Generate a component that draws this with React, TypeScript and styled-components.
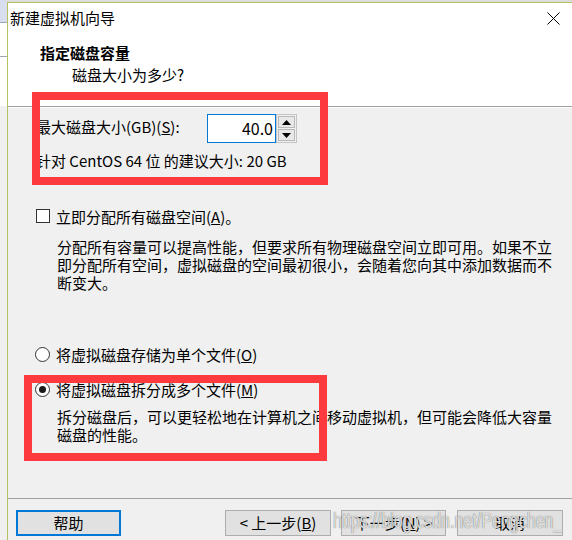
import React from "react";
import styled, { createGlobalStyle } from "styled-components";

const Global = createGlobalStyle`
  html, body { margin: 0; padding: 0; background: #f0f0f0; }
  body { font-family: "Noto Sans CJK SC", "Microsoft YaHei", sans-serif; color: #000; }
  * { box-sizing: border-box; }
`;

const Page = styled.div`
  position: relative;
  width: 572px;
  height: 540px;
  overflow: hidden;
  display: flex;
  background: #f0f0f0;
`;

const LeftStrip = styled.div`
  flex: 0 0 7px;
  display: flex;
  flex-direction: column;
  background: #f0f0f0;
`;

const StripPart = styled.div<{ $h: number; $bg: string; $line?: boolean }>`
  height: ${(p) => p.$h}px;
  background: ${(p) => p.$bg};
  border-bottom: ${(p) => (p.$line ? "1px solid #9ea6b3" : "none")};
`;

const Dialog = styled.div`
  flex: 1;
  display: flex;
  flex-direction: column;
  margin-top: 2px;
  border-top: 1px solid #b4c25e;
  border-left: 1px solid #b4c25e;
  background: #f0f0f0;
  box-shadow: 0 -2px 0 #dcdcdc;
`;

const Header = styled.div`
  height: 104px;
  background: #fff;
  border-bottom: 1px solid #a0a0a0;
  display: flex;
  flex-direction: column;
  padding: 5px 12px 0 2px;
`;

const TitleRow = styled.div`
  display: flex;
  justify-content: space-between;
  align-items: center;
  height: 20px;
`;

const Title = styled.div`
  font-size: 15px;
  line-height: 20px;
`;

const Heading = styled.div`
  margin: 15px 0 0 30px;
  font-size: 15px;
  line-height: 20px;
  font-weight: 700;
`;

const SubHeading = styled.div`
  margin: 2px 0 0 62px;
  font-size: 15px;
  line-height: 20px;
`;

const Body = styled.div`
  height: 391px;
  border-top: 1px solid #fff;
  display: flex;
  flex-direction: column;
  padding: 6px 0 0 28px;
  font-size: 15px;
`;

const SizeRow = styled.div`
  display: flex;
  align-items: center;
  height: 29px;
`;

const SizeLabel = styled.div`
  flex: 0 0 171px;
  line-height: 20px;
  margin-top: -3px;
`;

const SpinInput = styled.div`
  width: 69px;
  height: 29px;
  border: 1px solid #0078d7;
  background: #fff;
  text-align: right;
  padding-right: 2px;
  line-height: 26px;
  font-size: 16px;
`;

const SpinButtons = styled.div`
  display: flex;
  flex-direction: column;
  gap: 1px;
  width: 21px;
  height: 29px;
  border: 1px solid #c4c4c4;
  padding: 1px;
  background: #f0f0f0;
`;

const SpinBtn = styled.div`
  flex: 1;
  border: 1px solid #b8b8b8;
  background: #e8e8e8;
  display: flex;
  align-items: center;
  justify-content: center;
`;

const Line = styled.div<{ $mt: number; $indent?: number }>`
  margin-top: ${(p) => p.$mt}px;
  margin-left: ${(p) => p.$indent ?? 0}px;
  line-height: 20px;
`;

const OptionRow = styled.div<{ $mt: number }>`
  margin-top: ${(p) => p.$mt}px;
  display: flex;
  align-items: center;
  height: 20px;
  gap: 6px;
`;

const CheckBox = styled.div`
  width: 14px;
  height: 14px;
  border: 1px solid #333;
  background: #fff;
  margin-left: 0;
`;

const Radio = styled.div<{ $on?: boolean }>`
  width: 15px;
  height: 15px;
  margin-left: -1px;
  border-radius: 50%;
  border: 1px solid #333;
  background: #fff;
  display: flex;
  align-items: center;
  justify-content: center;
  &::after {
    content: "";
    display: ${(p) => (p.$on ? "block" : "none")};
    width: 7px;
    height: 7px;
    border-radius: 50%;
    background: #1a1a1a;
  }
`;

const Desc = styled.div<{ $mt: number }>`
  margin: ${(p) => p.$mt}px 0 0 21px;
  line-height: 18px;
  width: 500px;
`;

const Footer = styled.div`
  flex: 1;
  border-top: 1px solid #a0a0a0;
  display: flex;
  padding: 11px 9px 0 8px;
  gap: 10px;
`;

const Btn = styled.div<{ $focus?: boolean; $w: number; $push?: boolean }>`
  width: ${(p) => p.$w}px;
  height: 26px;
  background: #e1e1e1;
  border: ${(p) => (p.$focus ? "2px solid #0078d7" : "1px solid #adadad")};
  margin-left: ${(p) => (p.$push ? "auto" : "0")};
  display: flex;
  align-items: center;
  justify-content: center;
  font-size: 15px;
  line-height: 20px;
`;

const RedBox = styled.div<{ $l: number; $t: number; $w: number; $h: number }>`
  position: absolute;
  left: ${(p) => p.$l}px;
  top: ${(p) => p.$t}px;
  width: ${(p) => p.$w}px;
  height: ${(p) => p.$h}px;
  border: 8px solid #fd3a3d;
  pointer-events: none;
`;

const Watermark = styled.div`
  position: absolute;
  left: 333px;
  top: 508px;
  font-family: "Liberation Sans", Arial, sans-serif;
  font-size: 22px;
  line-height: 26px;
  white-space: nowrap;
  transform: scaleX(0.73);
  transform-origin: left top;
  color: rgba(255, 255, 255, 0.75);
  text-shadow: 0 0 1px rgba(90, 90, 90, 0.6), 0 0 1px rgba(90, 90, 90, 0.6);
  pointer-events: none;
`;

const Close = () => (
  <svg width="13" height="13" viewBox="0 0 13 13">
    <path d="M0.5 0.5 L12.5 12.5 M12.5 0.5 L0.5 12.5" stroke="#000" strokeWidth="1" fill="none" />
  </svg>
);

const Tri = ({ up }: { up?: boolean }) => (
  <svg width="9" height="5" viewBox="0 0 9 5">
    <path d={up ? "M4.5 0 L9 5 L0 5 Z" : "M0 0 L9 0 L4.5 5 Z"} fill="#000" />
  </svg>
);

export default function App() {
  return (
    <>
      <Global />
      <Page>
        <LeftStrip>
          <StripPart $h={23} $bg="#d9deee" $line />
          <StripPart $h={34} $bg="#ffffff" $line />
          <StripPart $h={49} $bg="#ffffff" />
        </LeftStrip>
        <Dialog>
          <Header>
            <TitleRow>
              <Title>新建虚拟机向导</Title>
              <Close />
            </TitleRow>
            <Heading>指定磁盘容量</Heading>
            <SubHeading>磁盘大小为多少?</SubHeading>
          </Header>
          <Body>
            <SizeRow>
              <SizeLabel>
                最大磁盘大小(GB)(<u>S</u>):
              </SizeLabel>
              <SpinInput>40.0</SpinInput>
              <SpinButtons>
                <SpinBtn>
                  <Tri up />
                </SpinBtn>
                <SpinBtn>
                  <Tri />
                </SpinBtn>
              </SpinButtons>
            </SizeRow>
            <Line $mt={8}>针对 CentOS 64 位 的建议大小: 20 GB</Line>
            <OptionRow $mt={35}>
              <CheckBox />
              <span>
                立即分配所有磁盘空间(<u>A</u>)。
              </span>
            </OptionRow>
            <Desc $mt={12}>
              分配所有容量可以提高性能，但要求所有物理磁盘空间立即可用。如果不立即分配所有空间，虚拟磁盘的空间最初很小，会随着您向其中添加数据而不断变大。
            </Desc>
            <OptionRow $mt={52}>
              <Radio />
              <span>
                将虚拟磁盘存储为单个文件(<u>O</u>)
              </span>
            </OptionRow>
            <OptionRow $mt={15}>
              <Radio $on />
              <span>
                将虚拟磁盘拆分成多个文件(<u>M</u>)
              </span>
            </OptionRow>
            <Desc $mt={9}>
              拆分磁盘后，可以更轻松地在计算机之间移动虚拟机，但可能会降低大容量磁盘的性能。
            </Desc>
          </Body>
          <Footer>
            <Btn $focus $w={105}>帮助</Btn>
            <Btn $w={106} $push>
              &lt; 上一步(<u>B</u>)
            </Btn>
            <Btn $w={105}>
              下一步(<u>N</u>) &gt;
            </Btn>
            <Btn $w={106} style={{ marginLeft: 1 }}>取消</Btn>
          </Footer>
        </Dialog>
        <RedBox $l={32} $t={92} $w={296} $h={93} />
        <RedBox $l={24} $t={375} $w={303} $h={86} />
        <Watermark>https://blog.csdn.net/Pengchen_</Watermark>
      </Page>
    </>
  );
}
